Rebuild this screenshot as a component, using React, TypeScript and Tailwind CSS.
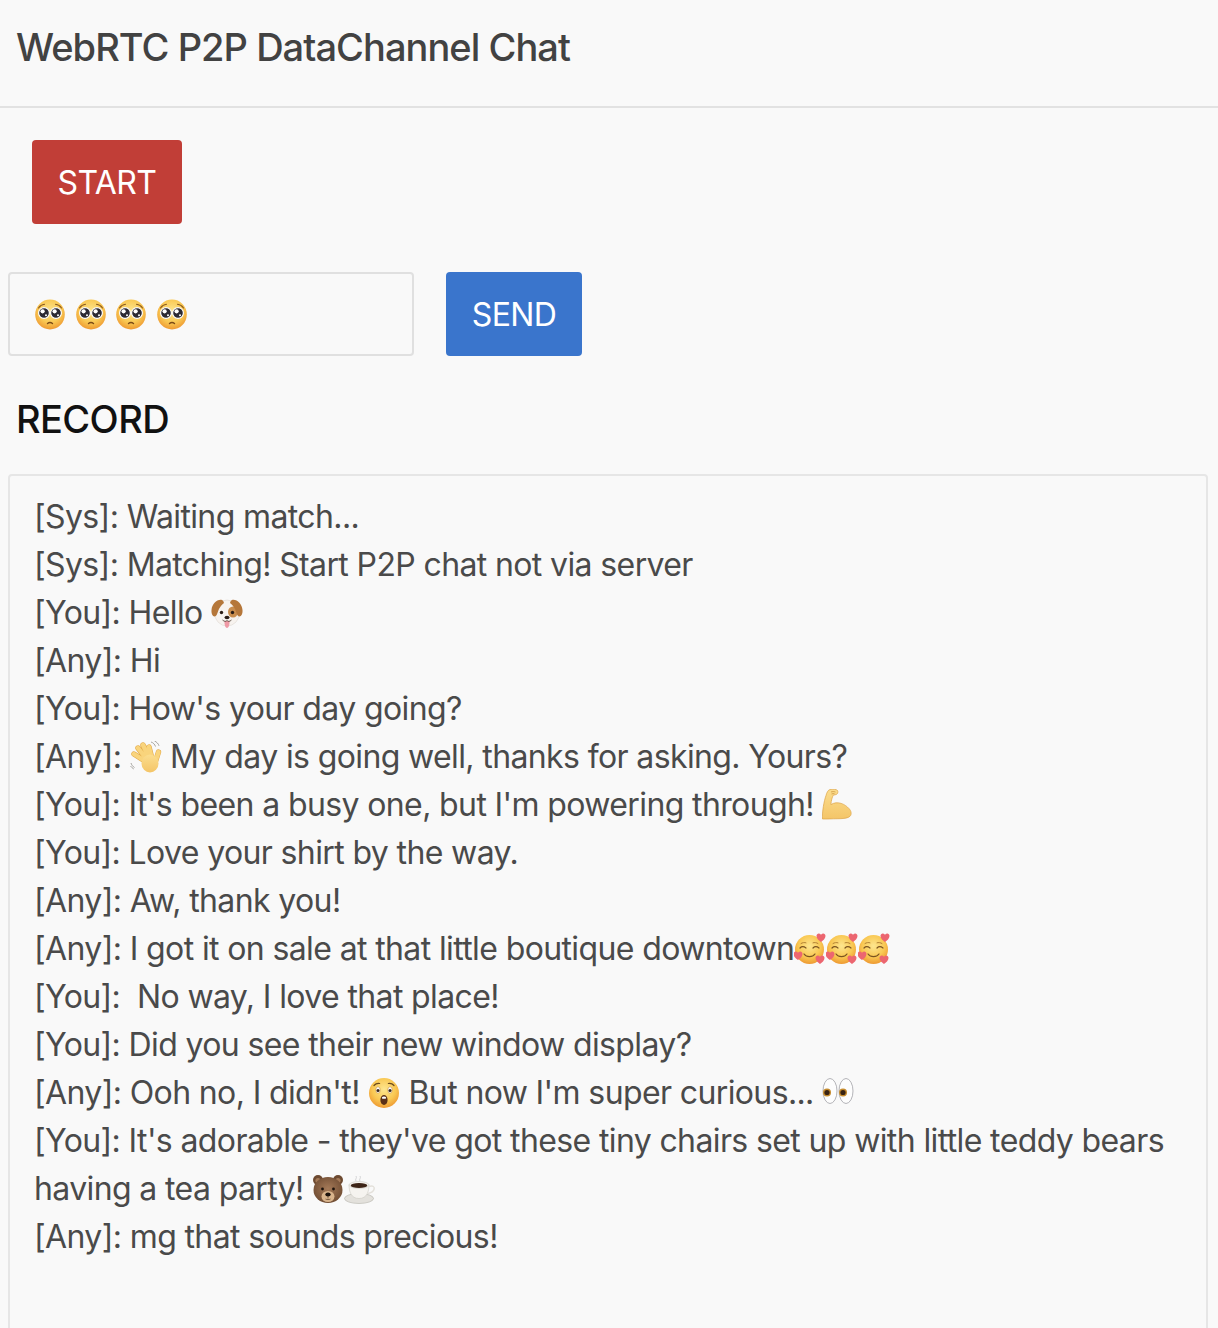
import type { ReactNode } from "react";

function Em({ children }: { children: ReactNode }) {
  return (
    <svg viewBox="0 0 32 32" className="inline-block align-[-5px] w-[32px] h-[32px]">
      {children}
    </svg>
  );
}

function Defs() {
  return (
    <svg width="0" height="0" className="absolute">
      <defs>
        <radialGradient id="face" cx="50%" cy="38%" r="62%">
          <stop offset="0%" stopColor="#fde68f" />
          <stop offset="62%" stopColor="#f9c853" />
          <stop offset="100%" stopColor="#ee9a32" />
        </radialGradient>
        <linearGradient id="hand" x1="0" y1="0" x2="0" y2="1">
          <stop offset="0%" stopColor="#fbdd8e" />
          <stop offset="100%" stopColor="#f4c568" />
        </linearGradient>
        <radialGradient id="fur" cx="50%" cy="45%" r="60%">
          <stop offset="0%" stopColor="#a57a58" />
          <stop offset="100%" stopColor="#6d4a31" />
        </radialGradient>
      </defs>
    </svg>
  );
}

function Pleading() {
  return (
    <Em>
      <ellipse cx="16" cy="16.500" rx="14.800" ry="15" fill="url(#face)" />
      <path d="M4.500 10c1.500-2.200 3.700-3.500 6-3.700M27.500 10c-1.500-2.200-3.700-3.500-6-3.700" stroke="#8a5a1e" strokeWidth="1.100" fill="none" strokeLinecap="round" />
      <circle cx="10" cy="15" r="5.400" fill="#2c2a33" stroke="#fff" strokeWidth="1.200" />
      <circle cx="22" cy="15" r="5.400" fill="#2c2a33" stroke="#fff" strokeWidth="1.200" />
      <circle cx="8.600" cy="13.300" r="2.100" fill="#fff" />
      <circle cx="20.600" cy="13.300" r="2.100" fill="#fff" />
      <circle cx="12" cy="17.300" r="1" fill="#fff" />
      <circle cx="24" cy="17.300" r="1" fill="#fff" />
      <path d="M13.500 25.500c1.500-1.300 3.500-1.300 5 0" stroke="#7a4a16" strokeWidth="1.400" fill="none" strokeLinecap="round" />
    </Em>
  );
}

function Dog() {
  return (
    <Em>
      <ellipse cx="16" cy="16" rx="12.500" ry="13" fill="#f7f3ef" stroke="#d9d3cc" strokeWidth=".5" />
      <ellipse cx="22" cy="15" rx="5" ry="5.500" fill="#c98d4e" />
      <path d="M11 3C6 2 1 7 .5 13c-.3 3.500 1 6.500 3 6.500C6 19.500 6.500 15 8 12c1-2 3-4.500 5-6-.4-1.500-1-2.700-2-3z" fill="#b5773a" />
      <path d="M21 3c5-1 10 4 10.500 10 .3 3.500-1 6.500-3 6.500C26 19.500 25.500 15 24 12c-1-2-3-4.500-5-6 .4-1.500 1-2.700 2-3z" fill="#b5773a" />
      <circle cx="10.500" cy="15.500" r="1.700" fill="#2a1d16" />
      <circle cx="21.500" cy="15.500" r="1.700" fill="#2a1d16" />
      <ellipse cx="16" cy="20.500" rx="2.500" ry="1.800" fill="#2a1d16" />
      <path d="M13.500 24h5c.2 3.300-.7 7-2.500 7s-2.700-3.700-2.500-7z" fill="#ef9aa6" />
      <path d="M11.500 23c2 1.800 3.500 1.800 4.500.3 1 1.500 2.500 1.500 4.500-.3" stroke="#4d3a2e" strokeWidth=".8" fill="none" />
    </Em>
  );
}

function Wave() {
  return (
    <Em>
      <g stroke="#e2a948" strokeWidth="5.400" strokeLinecap="round">
        <path d="M18 22 4 13M18 20 8 7M20 19 13 4M22 18 19 6M25 22l3.500-11" />
      </g>
      <g stroke="#f9d47c" strokeWidth="4.400" strokeLinecap="round">
        <path d="M18 22 4 13M18 20 8 7M20 19 13 4M22 18 19 6M25 22l3.500-11" />
      </g>
      <ellipse cx="20" cy="22.500" rx="8.500" ry="9" fill="url(#hand)" />
      <path d="M21 1c2 .5 4 2.500 4.500 4.500M24.500 0c2 .8 4 2.800 4.500 4.800M1 22c.5 2 2 3.700 3.500 4.500M.5 25c1 1.300 2 2.300 3.300 3" stroke="#85827c" strokeWidth=".7" fill="none" />
    </Em>
  );
}

function Muscle() {
  return (
    <Em>
      <path d="M.5 30C0 23 2 12 4 6.500 4.800 3.500 6 1 8 .5c2.500-.6 6.500-.3 7.500 1 .7 1.200.4 3-.8 3.800-1 .6-2.200.5-3.300.8-1.200 1.800-2.200 5.500-2.500 9.500 3-2 6.800-2.300 10.200-1.200 3.200 1 6 3 8 5.300 2.200 2.300 2.800 5.500 1 7.500-2 2-6 2.300-10 2.500-4.500.2-9 0-13 .3z" fill="url(#hand)" stroke="#dca346" strokeWidth=".7" />
      <path d="M9 3c1.500-.6 3-.5 4.500 0M9.500 5c1-.4 2-.5 3-.3" stroke="#c98f36" strokeWidth=".7" fill="none" />
    </Em>
  );
}

function Heart({ x, y }: { x: number; y: number }) {
  return (
    <path
      transform={`translate(${x} ${y})`}
      d="M0 2.500C0 .8 1.300-.2 2.600 0 3.400.1 4 .6 4.500 1.300 5 .6 5.600.1 6.400 0 7.700-.2 9 .8 9 2.500 9 5 6.500 7.200 4.500 8.500 2.500 7.200 0 5 0 2.500z"
      fill="#ec6670"
    />
  );
}

function Hearts() {
  return (
    <Em>
      <circle cx="15.500" cy="16.500" r="14.500" fill="url(#face)" />
      <path d="M6 15c1.500-1.500 4-1.500 6 0M19 15c1.500-1.500 4-1.500 6 0" stroke="#7a5320" strokeWidth="1.200" fill="none" strokeLinecap="round" />
      <path d="M7 10.500c1.500-1 3.500-1.200 5-.7M19 9.800c1.500-.5 3.500-.3 5 .7" stroke="#a8772c" strokeWidth=".9" fill="none" strokeLinecap="round" />
      <path d="M10 21c2.500 3.500 8.500 3.500 11 0" stroke="#7a5320" strokeWidth="1.200" fill="none" strokeLinecap="round" />
      <Heart x={22.500} y={.5} />
      <Heart x={-.5} y={18.500} />
      <Heart x={21.500} y={22.500} />
    </Em>
  );
}

function Hushed() {
  return (
    <Em>
      <circle cx="16" cy="16" r="15" fill="url(#face)" />
      <path d="M6 8.500c1.500-1.700 3.700-2.400 5.700-2M26 8.500c-1.500-1.700-3.700-2.400-5.700-2" stroke="#6b4a1c" strokeWidth="1.200" fill="none" strokeLinecap="round" />
      <ellipse cx="10" cy="13" rx="2.200" ry="3.200" fill="#fff" stroke="#b97e2b" strokeWidth=".5" />
      <ellipse cx="22" cy="13" rx="2.200" ry="3.200" fill="#fff" stroke="#b97e2b" strokeWidth=".5" />
      <circle cx="10" cy="13.500" r="1.500" fill="#35241a" />
      <circle cx="22" cy="13.500" r="1.500" fill="#35241a" />
      <ellipse cx="16" cy="23" rx="3.600" ry="5" fill="#5a3018" />
      <path d="M13.800 20.500c1-1.200 3.400-1.200 4.400 0l-.5 1.200h-3.400z" fill="#fff" />
    </Em>
  );
}

function Eyes() {
  return (
    <Em>
      <ellipse cx="8" cy="14" rx="7" ry="12.500" fill="#fdfdfd" stroke="#b4b4b8" strokeWidth="1" />
      <ellipse cx="24" cy="14" rx="7" ry="12.500" fill="#fdfdfd" stroke="#b4b4b8" strokeWidth="1" />
      <circle cx="5" cy="15.500" r="4" fill="#c58b2e" />
      <circle cx="21" cy="15.500" r="4" fill="#c58b2e" />
      <circle cx="5" cy="15.500" r="2.600" fill="#3a2413" />
      <circle cx="21" cy="15.500" r="2.600" fill="#3a2413" />
    </Em>
  );
}

function Bear() {
  return (
    <Em>
      <circle cx="6" cy="7" r="5" fill="#6d4a31" />
      <circle cx="26" cy="7" r="5" fill="#6d4a31" />
      <circle cx="6" cy="7.500" r="2.600" fill="#a57a58" />
      <circle cx="26" cy="7.500" r="2.600" fill="#a57a58" />
      <ellipse cx="16" cy="17" rx="14.500" ry="13" fill="url(#fur)" />
      <circle cx="10.500" cy="16" r="1.400" fill="#1d130d" />
      <circle cx="21.500" cy="16" r="1.400" fill="#1d130d" />
      <ellipse cx="16" cy="23.500" rx="6.500" ry="5.500" fill="#d9b48c" />
      <ellipse cx="16" cy="21.500" rx="2.700" ry="1.900" fill="#1d130d" />
      <path d="M16 23v2.500M13.500 26c1.500.8 3.500.8 5 0" stroke="#5a3c26" strokeWidth=".7" fill="none" />
    </Em>
  );
}

function Coffee() {
  return (
    <Em>
      <path d="M12 8c-1.500-1.500 1.500-3 0-5M16 8c-1.500-1.500 1.500-3 0-5" stroke="#d4d4d6" strokeWidth="1" fill="none" />
      <ellipse cx="15" cy="25.500" rx="14.500" ry="5" fill="#e3e1dc" stroke="#b4b1a9" strokeWidth=".6" />
      <path d="M5 11.500c0 7 2 14 10 14s10-7 10-14z" fill="#f5f3ef" stroke="#c5c2ba" strokeWidth=".5" />
      <ellipse cx="15" cy="12" rx="10" ry="3.500" fill="#f5f3ef" stroke="#c5c2ba" strokeWidth=".5" />
      <ellipse cx="15" cy="12.500" rx="8.300" ry="2.500" fill="#3d2417" />
      <path d="M25 13.500c4-1.500 6 .5 5 3-.8 2.300-3.500 3.500-6.500 4" stroke="#e4e1db" strokeWidth="1.500" fill="none" />
    </Em>
  );
}

const btn = "rounded-[4px] text-white text-[32px] tracking-[-0.6px] leading-[86px] h-[84px] text-center";

export default function App() {
  return (
    <div className="h-[1328px] overflow-hidden bg-[#f9f9f9] font-['Inter',_'Liberation_Sans',_sans-serif]">
      <Defs />
      <header className="h-[108px] border-b-2 border-[#e2e2e2] pl-[16px] flex items-center">
        <h1 className="text-[38px] font-medium tracking-[-0.95px] text-[#424242] pb-[12px]">
          WebRTC P2P DataChannel Chat
        </h1>
      </header>

      <div className="ml-[32px] mt-[32px] w-[150px]">
        <div className={`${btn} bg-[#c13e37]`}>START</div>
      </div>

      <div className="flex mt-[48px] ml-[8px] gap-[32px]">
        <div className="w-[406px] h-[84px] border-2 border-[#e0e0e0] rounded-[4px] pl-[24px] flex items-center gap-[8.600px]">
          <Pleading />
          <Pleading />
          <Pleading />
          <Pleading />
        </div>
        <div className={`${btn} w-[136px] bg-[#3a75cc]`}>SEND</div>
      </div>

      <h2 className="ml-[16px] mt-[39px] text-[38px] leading-[48px] font-medium tracking-[-0.6px] text-[#111111]">
        RECORD
      </h2>

      <div className="ml-[8px] mr-[10px] mt-[31px] h-[900px] border-2 border-[#e6e6e6] rounded-[4px] pl-[24px] pr-[20px] pt-[17px] text-[32px] leading-[48px] text-[#4a4a4a] whitespace-pre-wrap tracking-[-0.62px]">
        <p>[Sys]: Waiting match...</p>
        <p>[Sys]: Matching! Start P2P chat not via server</p>
        <p>[You]: Hello <Dog /></p>
        <p>[Any]: Hi</p>
        <p>[You]: How's your day going?</p>
        <p>[Any]: <Wave /> My day is going well, thanks for asking. Yours?</p>
        <p>[You]: It's been a busy one, but I'm powering through! <Muscle /></p>
        <p>[You]: Love your shirt by the way.</p>
        <p>[Any]: Aw, thank you!</p>
        <p>[Any]: I got it on sale at that little boutique downtown<Hearts /><Hearts /><Hearts /></p>
        <p>[You]:  No way, I love that place!</p>
        <p>[You]: Did you see their new window display?</p>
        <p>[Any]: Ooh no, I didn't! <Hushed /> But now I'm super curious... <Eyes /></p>
        <p>[You]: It's adorable - they've got these tiny chairs set up with little teddy bears having a tea party! <Bear /><Coffee /></p>
        <p>[Any]: mg that sounds precious!</p>
      </div>
    </div>
  );
}
